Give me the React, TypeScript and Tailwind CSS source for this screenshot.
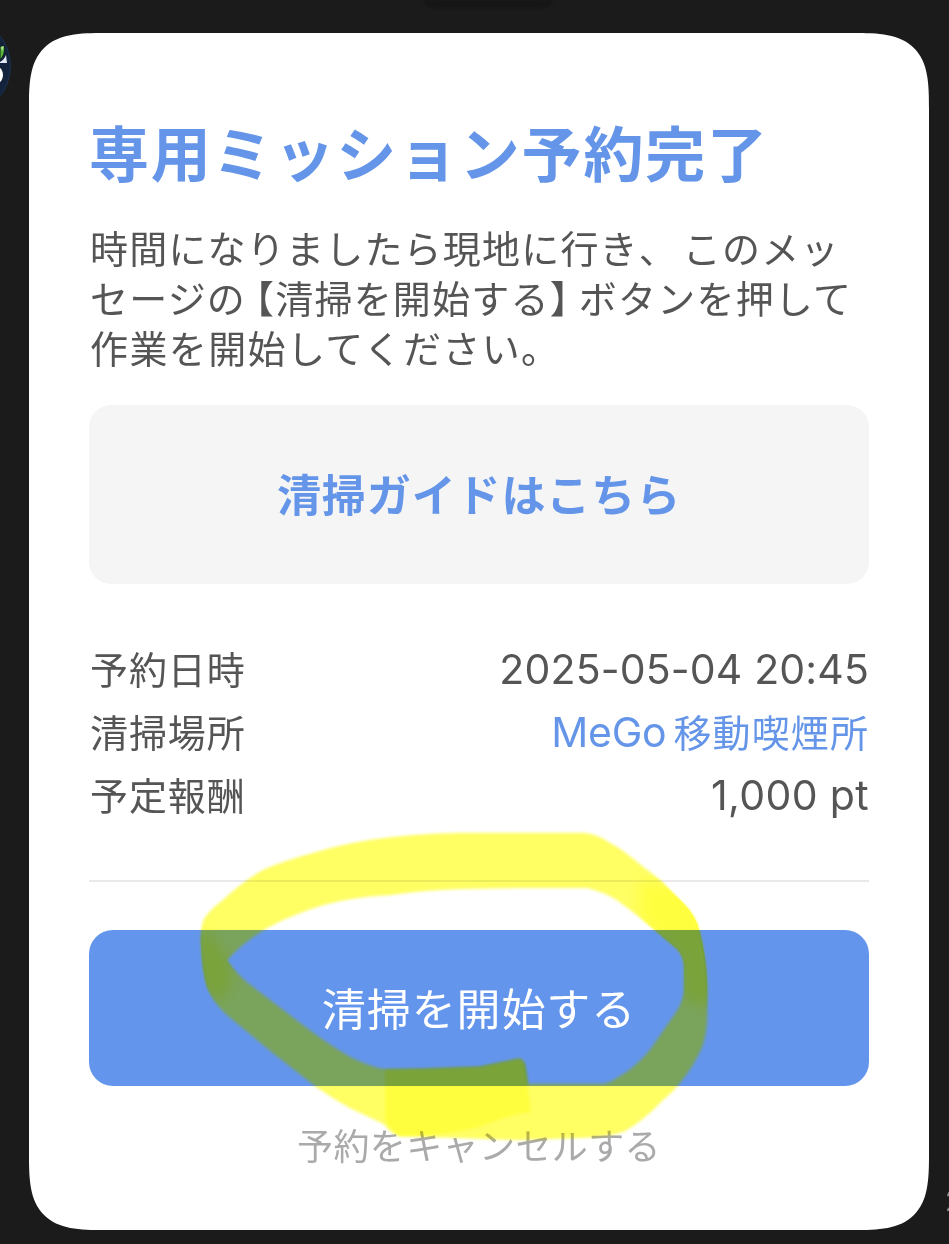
import React from 'react';

type Row = {
  label: string;
  value: React.ReactNode;
  link?: boolean;
};

const rows: Row[] = [
  {
    label: '予約日時',
    value: <span className="text-[41px] tracking-[0.15px]">2025-05-04 20:45</span>,
  },
  {
    label: '清掃場所',
    value: (
      <>
        <span className="text-[41px] tracking-[-0.2px] mr-[7px]">MeGo</span>
        <span className="text-[38px] tracking-[1.1px]">移動喫煙所</span>
      </>
    ),
    link: true,
  },
  {
    label: '予定報酬',
    value: <span className="text-[41px] tracking-[0.35px]">1,000 pt</span>,
  },
];

// contorno externo + interno do traço
const RING =
  'M460 833 Q410 834 370 840 Q340 845 317 852 Q286 860 263 870 Q242 882 223 900 Q206 913 203 922 Q200 932 201 945 Q202 970 207 987 Q213 1002 227 1015 L273 1053 L315 1086 Q332 1098 350 1108 L384 1124 Q390 1133 400 1136 L460 1138 L517 1140 L577 1138 Q610 1137 625 1131 Q643 1121 663 1100 Q672 1093 680 1083 Q695 1064 702 1047 Q708 1030 707 1010 Q708 985 706 967 Q703 940 697 923 Q692 911 680 900 L660 880 L637 862 Q620 848 610 843 Q595 833 583 833 L517 833 Z ' +
  'M227 960 Q242 943 267 928 Q283 919 300 913 Q320 905 340 901 Q365 896 390 895 Q425 890 460 889 L517 888 L587 888 Q602 891 617 900 L637 915 L657 932 L677 949 Q684 957 684 967 L684 992 Q683 1001 677 1011 L650 1050 Q634 1069 617 1078 Q609 1084 600 1084 L528 1084 L524 1064 Q523 1058 517 1059 L480 1067 L423 1069 L384 1069 Q373 1068 350 1057 Q326 1043 300 1023 L257 990 Q237 976 227 960 Z';

function Avatar() {
  return (
    <svg className="absolute left-0 top-[16px]" width="12" height="100" viewBox="0 16 12 100">
      <circle cx="-38" cy="66" r="48.5" fill="#13233b" stroke="#1b3352" strokeWidth="1" />
      <path d="M0 46 H4.5 C5 53 3 57 0 60 Z" fill="#57b53a" stroke="#0d1a20" strokeWidth="1" />
      <path d="M1 47 L4 46 L2 51 Z" fill="#b9e59b" />
      <path d="M0 62 Q4 60 6 55 L7 63 H0 Z" fill="#e4e9fa" />
      <ellipse cx="-3" cy="75" rx="6" ry="8" fill="#fff" />
    </svg>
  );
}

// marca-texto amarelo por cima do botão
function Highlighter() {
  return (
    <svg
      className="absolute left-0 top-0 pointer-events-none"
      width="949"
      height="1244"
      viewBox="0 0 949 1244"
    >
      <defs>
        <filter id="soft" x="-5%" y="-5%" width="110%" height="110%">
          <feGaussianBlur stdDeviation="1.6" />
        </filter>
        <filter id="softer" x="-30%" y="-30%" width="160%" height="160%">
          <feGaussianBlur stdDeviation="7" />
        </filter>
        <clipPath id="ring">
          <path d={RING} clipRule="evenodd" />
        </clipPath>
      </defs>
      <g className="mix-blend-multiply">
        <path fill="#ffff6c" fillRule="evenodd" filter="url(#soft)" d={RING} />
        <g clipPath="url(#ring)">
          <path
            fill="#ffff40"
            filter="url(#softer)"
            d="M198 932 Q212 928 216 943 Q222 950 230 962 Q235 985 222 1000 Q205 1000 198 970 Z"
          />
          <path
            fill="#ffff40"
            filter="url(#softer)"
            d="M640 880 L690 890 Q712 915 715 945 L712 1008 L684 1000 L680 960 L655 935 L640 915 Z"
          />
        </g>
        <path
          fill="#ffff40"
          filter="url(#soft)"
          d="M385 1070 L423 1069 L480 1067 L520 1059 L525 1064 L531 1112 Q505 1116 490 1123 Q460 1135 400 1136 Q388 1128 385 1118 Z"
        />
      </g>
      <path
        fill="#fff63c"
        fillOpacity="0.14"
        fillRule="evenodd"
        filter="url(#soft)"
        d={RING}
      />
    </svg>
  );
}

export default function App() {
  return (
    <div className="relative isolate w-[949px] h-[1244px] overflow-hidden bg-[#1b1b1b] pt-[33px] pl-[29px] font-['Inter','Noto_Sans_CJK_JP',sans-serif]">
      <div className="absolute top-0 left-[424px] w-[128px] h-[8px] bg-[#161616] rounded-b-lg blur-[1px]" />
      <Avatar />
      <div className="absolute left-[945px] top-[1183px] text-[28px] leading-9 text-[#8b8b8b]">2</div>

      {/* Card */}
      <div className="w-[900px] h-[1197px] bg-white rounded-[54px] supports-[corner-shape:squircle]:rounded-[76px] [corner-shape:superellipse(1.65)] px-[60px] pt-[82px] flex flex-col">
        <h1 className="h-[80px] leading-[80px] text-[60px] tracking-[1.8px] font-bold text-[#6495e8] whitespace-nowrap">
          専用ミッション予約完了
        </h1>

        <div className="mt-[29px] pl-px text-[38px] leading-[50px] tracking-[1.2px] text-[#555] whitespace-nowrap">
          <p>
            時間になりましたら現地に行き<span className="tracking-[6px]">、</span>このメッ
          </p>
          <p>
            セージの
            <span className="ml-[9px] [font-feature-settings:'halt']">【</span>
            清掃を開始する
            <span className="mr-[9px] [font-feature-settings:'halt']">】</span>
            ボタンを押して
          </p>
          <p className="tracking-[1.4px]">作業を開始してください。</p>
        </div>

        <button className="mt-[31px] h-[179px] shrink-0 rounded-[22px] bg-[#f5f5f5] pt-[2px] text-[44px] tracking-[0.9px] font-bold text-[#6495e8]">
          清掃ガイドはこちら
        </button>

        {/* Detalhes */}
        <div className="mt-[54px] text-[#555]">
          {rows.map((row) => (
            <div key={row.label} className="flex justify-between items-baseline h-[63px] leading-[63px] whitespace-nowrap">
              <span className="pl-px text-[38px] tracking-[0.9px]">{row.label}</span>
              <span className={row.link ? 'text-[#6495e8]' : ''}>{row.value}</span>
            </div>
          ))}
        </div>

        <hr className="mt-[53px] border-0 h-[2px] shrink-0 bg-[#e9e9eb]" />

        <button className="mt-[48px] h-[156px] shrink-0 rounded-[24px] bg-[#6495ed] pt-[3px] text-white text-[44px] tracking-[0.9px]">
          清掃を開始する
        </button>
        <button className="mt-[34px] h-[54px] shrink-0 text-[36px] tracking-[0.4px] text-[#aaa]">
          予約をキャンセルする
        </button>
      </div>

      <Highlighter />
    </div>
  );
}
